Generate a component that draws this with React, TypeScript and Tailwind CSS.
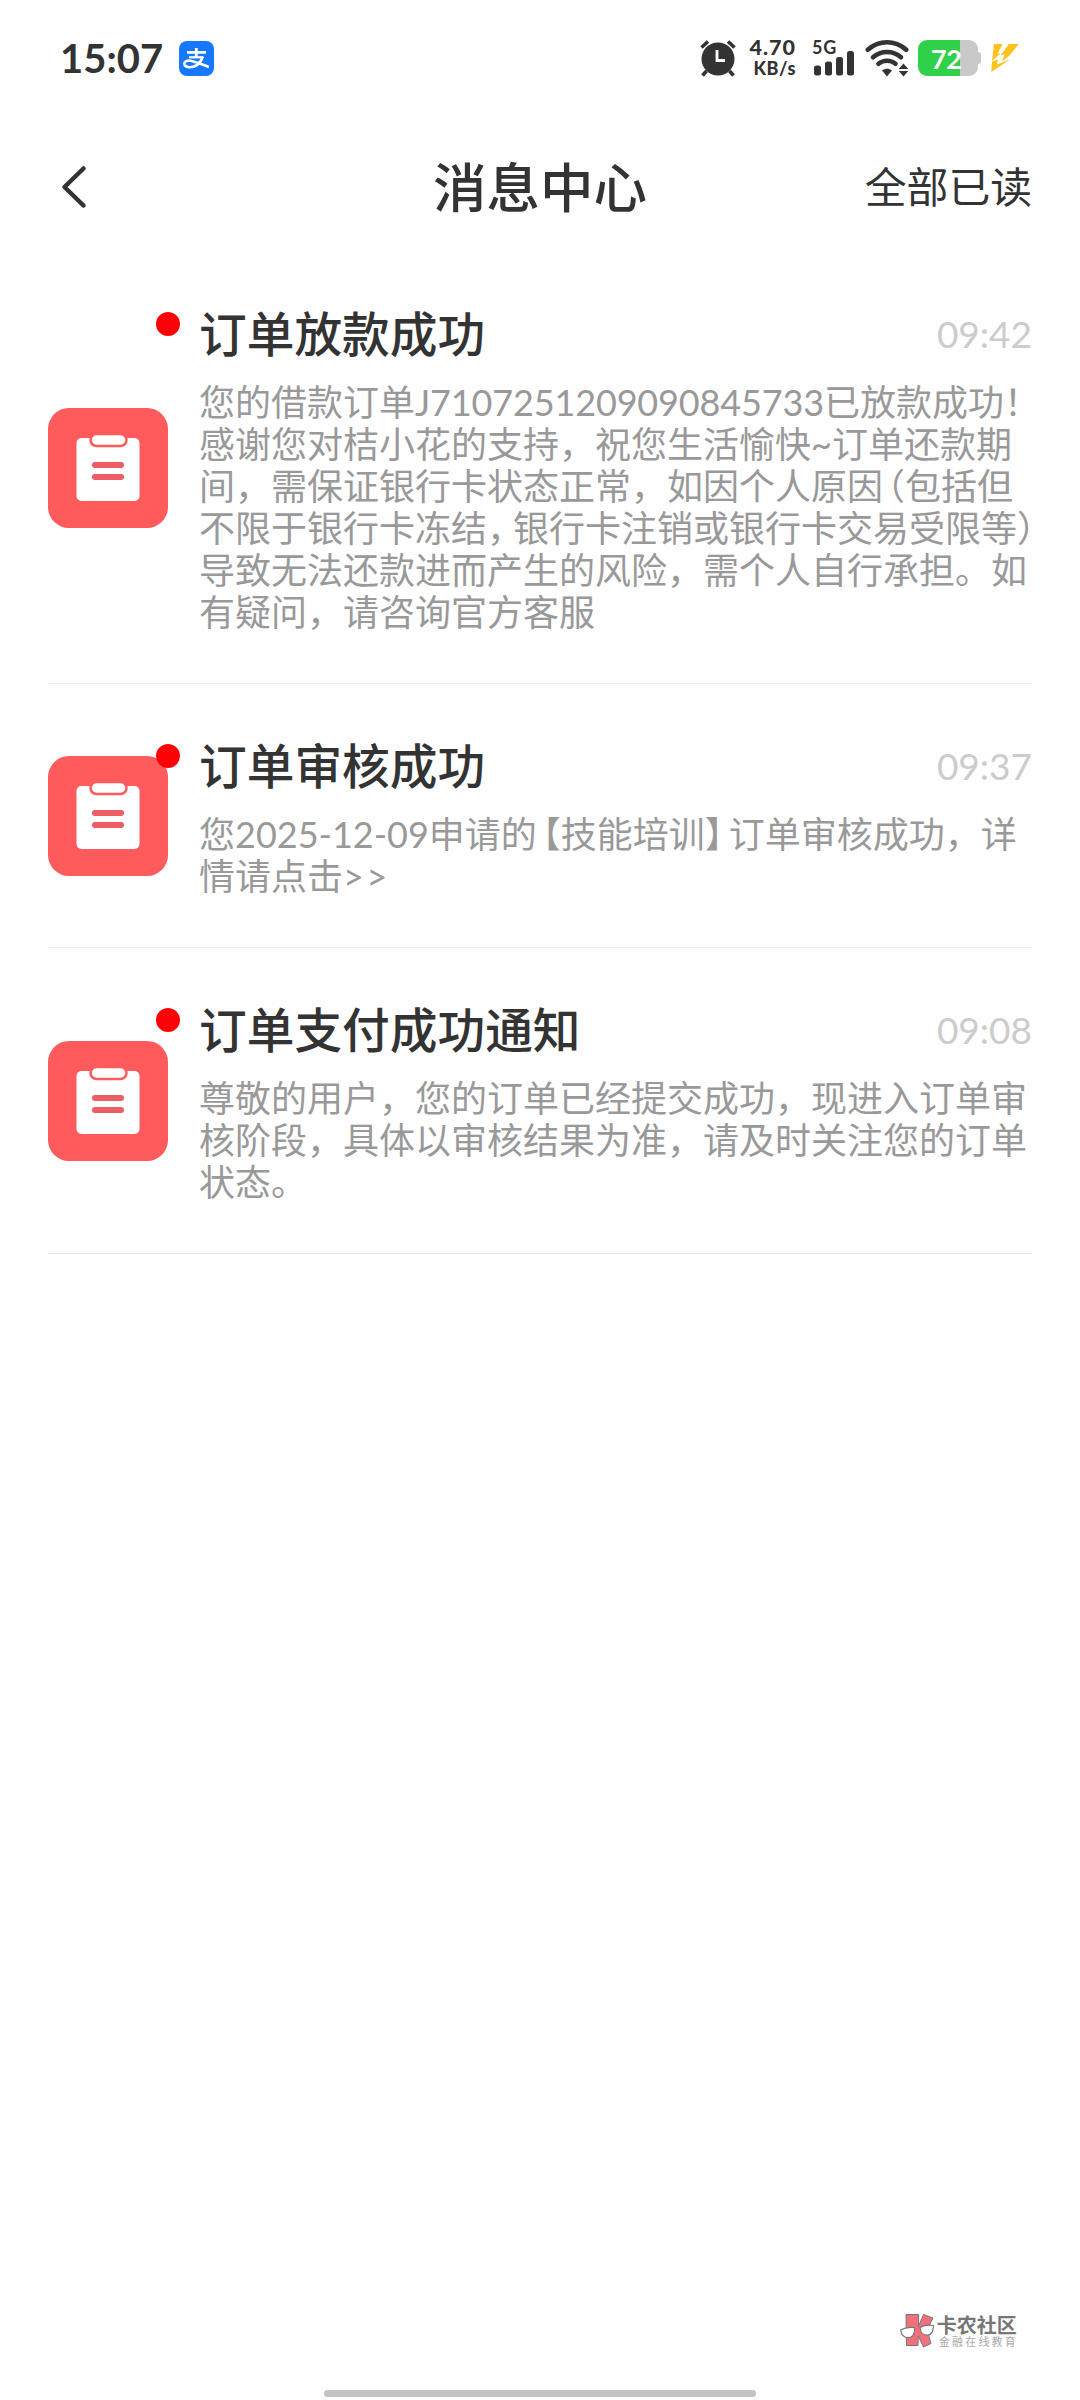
import type { ReactNode } from 'react';

interface Message {
  id: number;
  title: string;
  time: string;
  lines: ReactNode[];
}

const messages: Message[] = [
  {
    id: 1,
    title: '订单放款成功',
    time: '09:42',
    lines: [
      <>
        您的借款订单<span className="tracking-[-0.15px]">J7107251209090845733</span>已放款成功！
      </>,
      '感谢您对桔小花的支持，祝您生活愉快~订单还款期',
      <>
        间，需保证银行卡状态正常，如因个人原因
        <span className="ml-1 [font-feature-settings:'halt']">（</span>包括但
      </>,
      <>
        不限于银行卡冻结<span className="mr-2 [font-feature-settings:'halt']">，</span>
        银行卡注销或银行卡交易受限等）
      </>,
      '导致无法还款进而产生的风险，需个人自行承担。如',
      '有疑问，请咨询官方客服',
    ],
  },
  {
    id: 2,
    title: '订单审核成功',
    time: '09:37',
    lines: [
      <>
        您2025-12-09申请的<span className="ml-1.5 [font-feature-settings:'halt']">【</span>技能培训
        <span className="mr-1.5 [font-feature-settings:'halt']">】</span>
        订单审核成功，详
      </>,
      <>
        情请点击<span className="tracking-[2.5px]">&gt;&gt;</span>
      </>,
    ],
  },
  {
    id: 3,
    title: '订单支付成功通知',
    time: '09:08',
    lines: ['尊敬的用户，您的订单已经提交成功，现进入订单审', '核阶段，具体以审核结果为准，请及时关注您的订单', '状态。'],
  },
];

function AlipayIcon() {
  return (
    <svg className="ml-4 size-[35px]" viewBox="0 0 35 35" fill="none">
      <rect width="35" height="35" rx="8" fill="#1677ff" />
      <g stroke="#fff">
        <path d="M8 11.3h19M17.3 7v9" strokeWidth="2.8" />
        <path d="M10 16.3h14.2" strokeWidth="2.2" />
        <path
          d="M24 15.5c-2 5.5-6.5 10.5-13 10.7-3.8.1-5.8-1.6-5.7-3.6.2-2.3 2.8-3.2 5.6-2.9 5.6.6 11 3.8 19 6.2"
          strokeWidth="2.6"
        />
      </g>
    </svg>
  );
}

function AlarmIcon() {
  return (
    <svg className="h-[38px] w-[38px]" viewBox="0 0 38 38" fill="none">
      <circle cx="19" cy="20" r="16.5" fill="#333" />
      <path d="M2.5 8.5l6.5-6M35.5 8.5l-6.5-6M7.5 32l-4 4.5M30.5 32l4 4.5" stroke="#333" strokeWidth="3.6" />
      <path d="M18 11v10.500h8" stroke="#fff" strokeWidth="2.8" />
    </svg>
  );
}

function SignalIcon() {
  return (
    <svg className="h-[26px] w-[40px]" viewBox="0 0 40 26" fill="#333">
      <rect x="0" y="15.5" width="7" height="10" rx="2.5" />
      <rect x="11" y="11.5" width="7" height="14" rx="2.5" />
      <rect x="22" y="7" width="7" height="18.5" rx="2.5" />
      <rect x="33" y="1" width="7" height="24.5" rx="2.5" />
    </svg>
  );
}

function WifiIcon() {
  return (
    <svg className="h-[38px] w-[44px]" viewBox="0 0 44 38" fill="none">
      <g stroke="#333" strokeWidth="4.6" strokeLinecap="round">
        <path d="M2.8 10.8C14 .8 30 .8 41.2 10.8" />
        <path d="M8 18.3c8-7 20-7 28 0" />
        <path d="M13.5 24.8c5-4 12-4 17 0" />
      </g>
      <path d="M17 31.5c3-2.3 7-2.3 10 0L22 37.5z" fill="#333" />
      <path d="M38.5 24.5l4.8 5.5h-9.6zM38.5 37.5l4.8-5.5h-9.6z" fill="#333" />
    </svg>
  );
}

function Battery() {
  return (
    <div className="flex items-center">
      <div className="flex h-9 w-[60px] items-center overflow-hidden rounded-[9px] bg-gradient-to-r from-[#2fd149] from-[70%] to-[#c9c9c9] to-[70%]">
        <span className="w-full pl-[13px] text-[27px] leading-none font-bold tracking-[-0.5px] text-white">72</span>
      </div>
      <div className="h-3 w-[3px] rounded-r-sm bg-[#c9c9c9]" />
    </div>
  );
}

function BoltIcon() {
  return (
    <svg className="h-8 w-[30px]" viewBox="0 0 30 32" fill="#fcc21b">
      <path d="M4 2h8.500L7.500 12l3.500-1-9 8z" />
      <path d="M19 2h9.700L20 13l-8 6.500 2.500-7-4 1z" />
      <path d="M2 19.500l6-2-1 5 13-5L1.300 30z" />
    </svg>
  );
}

function StatusBar() {
  return (
    <div className="flex h-[116px] items-center pr-[60px] pl-[60px] text-[#333]">
      <span className="text-[40px] leading-none font-bold">15:07</span>
      <AlipayIcon />
      <div className="ml-auto flex items-center">
        <AlarmIcon />
        <div className="ml-3 flex flex-col items-end text-[21.5px] leading-[21px] font-black">
          <span className="-mr-px tracking-[1px]">4.70</span>
          <span className="-mr-px text-[18px] tracking-[0.6px]">KB/s</span>
        </div>
        <div className="ml-[19px] flex flex-col">
          <span className="-ml-0.5 h-[10px] text-[18px] leading-[14px] font-bold tracking-[0.8px]">5G</span>
          <SignalIcon />
        </div>
        <div className="ml-[11px]">
          <WifiIcon />
        </div>
        <div className="ml-[9px]">
          <Battery />
        </div>
        <div className="ml-[9px]">
          <BoltIcon />
        </div>
      </div>
    </div>
  );
}

function Header() {
  return (
    <header className="grid h-[136px] grid-cols-3 items-center px-12 pt-1.5 text-[#333]">
      <svg className="ml-3 h-[44px] w-[28px]" viewBox="0 0 28 44" fill="none">
        <path d="M23.5 3.5L4.5 22l19 18.5" stroke="#333" strokeWidth="4.5" strokeLinecap="round" strokeLinejoin="round" />
      </svg>
      <h1 className="pt-0.5 text-center text-[53.5px] leading-none font-medium">消息中心</h1>
      <button className="pt-0.5 text-right text-[41.8px] leading-none">全部已读</button>
    </header>
  );
}

function ClipboardIcon() {
  return (
    <svg className="size-[120px] shrink-0" viewBox="0 0 120 120">
      <rect width="120" height="120" rx="21" fill="#ff5a5c" />
      <rect x="28.5" y="30" width="63" height="63" rx="5" fill="#fff" />
      <rect x="42.5" y="26" width="36" height="12" rx="6" fill="#fff" stroke="#ff5a5c" strokeWidth="2.5" />
      <rect x="44" y="54" width="32" height="6" rx="3" fill="#ee5d63" />
      <rect x="44" y="66" width="32" height="6" rx="3" fill="#ee5d63" />
    </svg>
  );
}

function MessageItem({ message }: { message: Message }) {
  return (
    <li className="relative flex items-center border-b border-[#e9e9e9]">
      <ClipboardIcon />
      <span className="absolute top-[60px] left-[108px] size-6 rounded-full bg-[#fb0207]" />
      <div className="ml-[31px] min-w-0 flex-1 pt-12 pb-[50px]">
        <div className="mb-3 flex h-[69px] items-center justify-between">
          <h2 className="pb-0.5 text-[47.7px] leading-none font-medium text-[#333]">{message.title}</h2>
          <time className="pb-0.5 text-[37px] leading-none text-[#ccc]">{message.time}</time>
        </div>
        {message.lines.map((line, i) => (
          <p key={i} className="h-[42px] text-[36px] leading-[42px] whitespace-nowrap text-[#999]">
            {line}
          </p>
        ))}
      </div>
    </li>
  );
}

function CommunityMark() {
  return (
    <div className="flex items-center gap-[3px] self-end pr-[62px]">
      <svg className="h-9 w-[34px]" viewBox="0 0 34 36" stroke="#777">
        <path
          d="M6 1.500h12.700l-.3 12L23.500 1.500 33 5l-6 12 4 13.500-7.500 3.500-5.300-11-.2 9.500H6.500z"
          fill="#f0707c"
          strokeWidth="1"
        />
        <path
          d="M.7 17c4-2.500 9-3 14-2.300.2 6-2 10-6.200 10C4 24.700 1.200 21.500.7 17zM20 14.500c4-2 9-2.700 13.300-2 .4 5-1.800 9.500-5.800 9.700-4 .2-7-3-7.500-7.700z"
          fill="#fff"
          strokeWidth="1.2"
        />
      </svg>
      <div className="flex flex-col">
        <span className="text-[20px] leading-[20px] font-bold text-[#777]">卡农社区</span>
        <span className="pl-0.5 text-[11px] leading-[13px] tracking-[2.2px] text-[#aaa]">金融在线教育</span>
      </div>
    </div>
  );
}

export default function App() {
  return (
    <div className="flex h-[2400px] w-[1080px] flex-col overflow-hidden bg-[#fefefe] font-['Lato','Noto_Sans_CJK_SC',sans-serif]">
      <StatusBar />
      <Header />

      {/* Message list */}
      <ul className="px-12">
        {messages.map((message) => (
          <MessageItem key={message.id} message={message} />
        ))}
      </ul>

      <div className="mt-auto flex flex-col">
        <CommunityMark />
        <div className="mt-[41px] mb-[3px] h-[7px] w-[432px] self-center rounded-full bg-[#c3c3c3]" />
      </div>
    </div>
  );
}
